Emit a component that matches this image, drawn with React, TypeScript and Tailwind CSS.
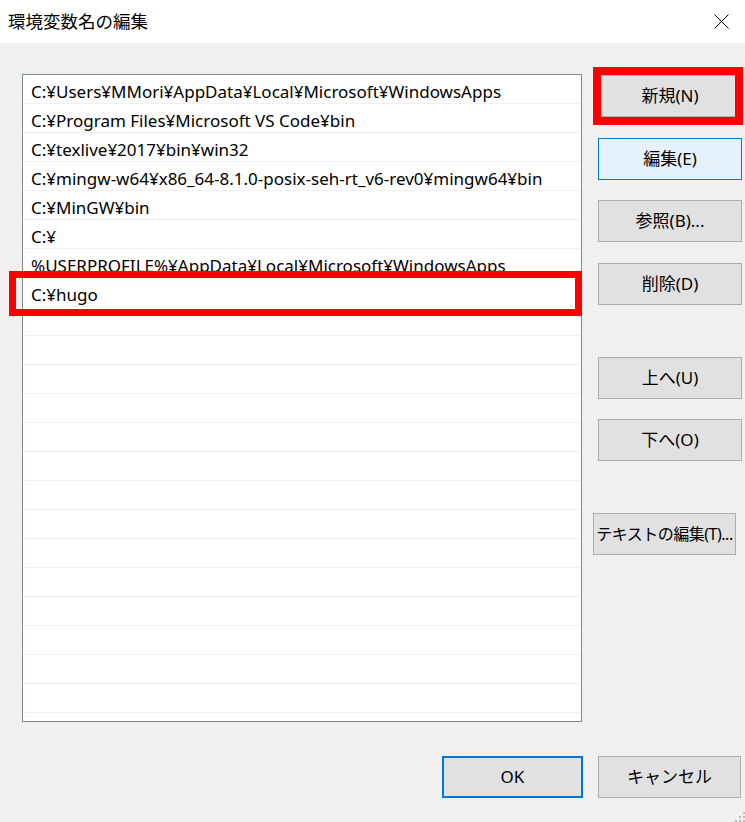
import React from "react";

const PATHS = [
  "C:¥Users¥MMori¥AppData¥Local¥Microsoft¥WindowsApps",
  "C:¥Program Files¥Microsoft VS Code¥bin",
  "C:¥texlive¥2017¥bin¥win32",
  "C:¥mingw-w64¥x86_64-8.1.0-posix-seh-rt_v6-rev0¥mingw64¥bin",
  "C:¥MinGW¥bin",
  "C:¥",
  "%USERPROFILE%¥AppData¥Local¥Microsoft¥WindowsApps",
  "C:¥hugo",
];

const ROWS = 23;

const FONT = { fontFamily: '"Noto Sans", "Noto Sans CJK JP", sans-serif' };

function Btn({ label, className = "" }: { label: string; className?: string }) {
  return (
    <button
      className={`h-[42px] w-[144px] flex items-center justify-center text-[17px] text-black bg-[#e1e1e1] border border-[#adadad] ${className}`}
    >
      {label}
    </button>
  );
}

export default function App() {
  return (
    <div
      className="relative w-[745px] h-[822px] bg-[#f0f0f0] overflow-hidden flex flex-col"
      style={FONT}
    >
      {/* title bar */}
      <div className="h-[43px] bg-white flex items-center justify-between pl-[8px] pr-[16px]">
        <span className="text-[17.5px] text-black">環境変数名の編集</span>
        <svg width="15" height="15" viewBox="0 0 15 15">
          <path d="M0.5 0.5 L14.5 14.5 M14.5 0.5 L0.5 14.5" stroke="#000" strokeWidth="1" />
        </svg>
      </div>

      <div className="flex pl-[22px] pt-[31px]">
        {/* list */}
        <div className="w-[560px] h-[648px] bg-white border border-[#828790] overflow-hidden">
          {Array.from({ length: ROWS }).map((_, i) => (
            <div
              key={i}
              className="h-[29px] border-b border-[#f0f0f0] flex items-center pl-[8px] pt-[5px] text-[17px] text-black whitespace-nowrap"
            >
              {PATHS[i] ?? ""}
            </div>
          ))}
        </div>

        {/* side buttons */}
        <div className="flex flex-col ml-[16px] pt-[1px]">
          <Btn label="新規(N)" />
          <Btn label="編集(E)" className="mt-[21px] !bg-[#e5f1fb] !border-[#0078d7]" />
          <Btn label="参照(B)..." className="mt-[20px]" />
          <Btn label="削除(D)" className="mt-[21px]" />
          <Btn label="上へ(U)" className="mt-[52px]" />
          <Btn label="下へ(O)" className="mt-[20px]" />
          <Btn label="テキストの編集(T)..." className="mt-[52px] -ml-[5px] !w-[143px] !text-[16px] tracking-[-0.5px]" />
        </div>
      </div>

      {/* bottom buttons */}
      <div className="flex justify-end gap-[15px] pr-[4px] mt-[34px]">
        <button className="h-[42px] w-[141px] flex items-center justify-center text-[17px] text-black bg-[#e1e1e1] border-2 border-[#0078d7]">
          OK
        </button>
        <Btn label="キャンセル" className="!w-[143px]" />
      </div>

      {/* resize grip */}
      <svg className="absolute right-0 bottom-0" width="10" height="10" viewBox="0 0 10 10">
        <rect x="8" y="0" width="2" height="2" fill="#bcbcbc" />
        <rect x="4" y="4" width="2" height="2" fill="#bcbcbc" />
        <rect x="8" y="4" width="2" height="2" fill="#bcbcbc" />
        <rect x="0" y="8" width="2" height="2" fill="#bcbcbc" />
        <rect x="4" y="8" width="2" height="2" fill="#bcbcbc" />
        <rect x="8" y="8" width="2" height="2" fill="#bcbcbc" />
      </svg>

      {/* red highlight boxes */}
      <div className="absolute left-[593px] top-[67px] w-[150px] h-[58px] border-[8px] border-[#ff0000]" />
      <div className="absolute left-[9px] top-[271px] w-[573px] h-[45px] border-[7px] border-[#ff0000]" />
    </div>
  );
}
